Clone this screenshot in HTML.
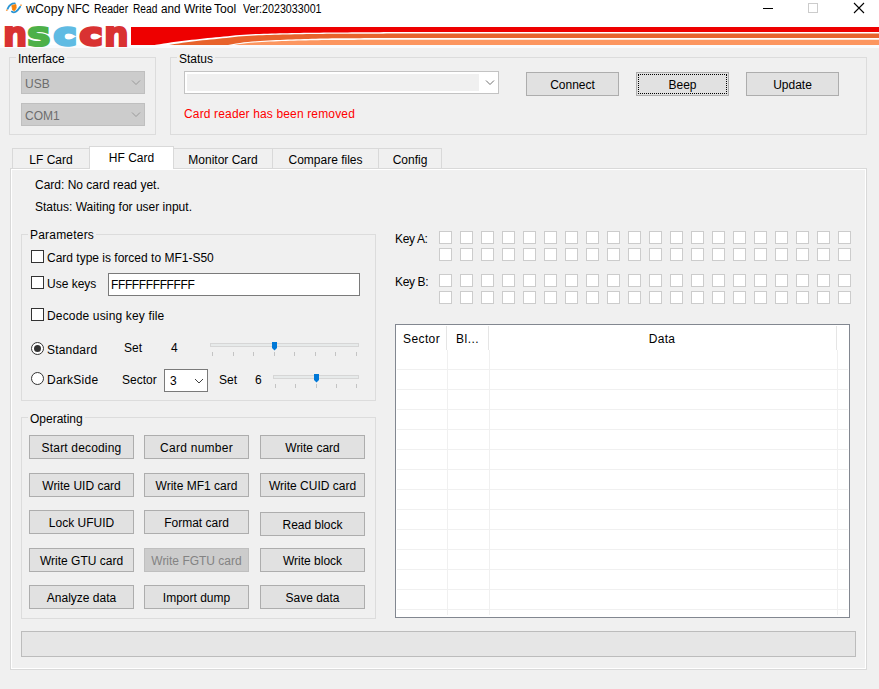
<!DOCTYPE html>
<html><head><meta charset="utf-8"><title>wCopy NFC Reader Read and Write Tool</title>
<style>
*{box-sizing:border-box;margin:0;padding:0}
html,body{width:879px;height:689px;overflow:hidden;background:#f0f0f0}
body{position:relative;font-family:"Liberation Sans",Arial,sans-serif;font-size:12px;color:#000}
.a{position:absolute}
.t{position:absolute;white-space:nowrap;line-height:14px;height:14px}
.gb{position:absolute;border:1px solid #dcdcdc}
.gl{position:absolute;background:#f0f0f0;padding:0 2px;white-space:nowrap;line-height:14px;height:14px}
.btn{position:absolute;background:#e1e1e1;border:1px solid #adadad;text-align:center;white-space:nowrap;line-height:14px}
.btn span{position:absolute;left:0;right:0;top:50%;margin-top:-6px}
.btn span.d{margin-top:-6px}
.cb{position:absolute;width:13px;height:13px;background:#fff;border:1px solid #333}
.kb{position:absolute;width:13px;height:13px;background:#fff;border:1px solid #cccccc}
.tab{position:absolute;top:148px;height:20px;border:1px solid #d9d9d9;border-bottom:none;background:#f0f0f0;text-align:center;line-height:14px}
.lg{position:absolute;top:0px;-webkit-text-stroke:2px currentColor;transform-origin:0 0}
.tab span{position:absolute;left:0;right:0;top:4px}
</style></head><body>
<!-- title bar -->
<div class="a" id="titlebar" style="left:0;top:0;width:879px;height:22px;background:#fff"></div>
<div class="t" id="title" style="left:27px;top:2px;width:300px"><span style="position:absolute;left:-0.7px;transform:scaleX(1.031);transform-origin:0 0">wCopy</span> <span style="position:absolute;left:40.4px;transform:scaleX(0.920);transform-origin:0 0">NFC</span> <span style="position:absolute;left:67.2px;transform:scaleX(0.867);transform-origin:0 0">Reader</span> <span style="position:absolute;left:105.6px;transform:scaleX(0.848);transform-origin:0 0">Read</span> <span style="position:absolute;left:133.6px;transform:scaleX(0.977);transform-origin:0 0">and</span> <span style="position:absolute;left:156.8px;transform:scaleX(1.001);transform-origin:0 0">Write</span> <span style="position:absolute;left:187.3px;transform:scaleX(1.014);transform-origin:0 0">Tool</span> <span style="position:absolute;left:215.7px;transform:scaleX(0.892);transform-origin:0 0">Ver:2023033001</span></div>
<svg class="a" style="left:0;top:0" width="879" height="22" viewBox="0 0 879 22">
<path d="M7.6,8.8 Q10,3.4 14.8,3.4" fill="none" stroke="#2a95d4" stroke-width="1.8" stroke-linecap="round"/>
<path d="M11.8,11.6 Q15.5,14.3 20.2,6.8" fill="none" stroke="#2a95d4" stroke-width="1.8" stroke-linecap="round"/>
<path d="M11.8,5.4 L16,4.6 L16.2,8 L14.6,10.8 L12.6,10 Z" fill="#f5820b" stroke="#f5820b" stroke-width="0.8" stroke-linejoin="round"/>
<circle cx="6.8" cy="10.2" r="0.9" fill="#f9a85a"/><circle cx="21" cy="5.2" r="0.9" fill="#f9a85a"/>
<rect x="763" y="8" width="10" height="1" fill="#000"/>
<rect x="808.5" y="3.5" width="9" height="9" fill="none" stroke="#cccccc" stroke-width="1"/>
<path d="M854,3 L864,13 M864,3 L854,13" stroke="#000" stroke-width="1.1" fill="none"/>
</svg>
<!-- banner -->
<svg class="a" style="left:0;top:22px" width="879" height="26" viewBox="0 22 879 26">
<rect x="0" y="22" width="879" height="26" fill="#fff"/>
<rect x="0" y="45" width="879" height="3" fill="#fafbfd"/>
<path d="M131,27 H879 V32 H460 L459.7,32.0 L455.7,32.0 L451.7,32.0 L447.7,32.0 L443.7,32.0 L439.7,32.0 L435.7,32.0 L431.7,32.0 L427.7,32.0 L423.7,32.0 L419.7,32.0 L415.7,32.0 L411.7,32.01 L407.7,32.02 L403.7,32.03 L399.7,32.04 L395.7,32.06 L391.7,32.08 L387.7,32.1 L383.7,32.12 L379.7,32.15 L375.7,32.17 L371.7,32.2 L367.7,32.23 L363.7,32.26 L359.7,32.29 L355.7,32.32 L351.7,32.35 L347.7,32.38 L343.7,32.41 L339.7,32.44 L335.7,32.48 L331.7,32.52 L327.7,32.56 L323.7,32.6 L319.7,32.65 L315.7,32.7 L311.7,32.75 L307.7,32.8 L303.7,32.86 L299.7,32.92 L295.7,32.99 L291.7,33.06 L287.7,33.14 L283.7,33.23 L279.7,33.33 L275.7,33.44 L271.7,33.55 L267.7,33.67 L263.7,33.78 L259.7,33.91 L255.7,34.05 L251.7,34.22 L247.7,34.42 L243.7,34.69 L239.7,35.01 L235.7,35.37 L231.7,35.76 L227.7,36.16 L223.7,36.57 L219.7,36.97 L215.7,37.35 L211.7,37.73 L207.7,38.12 L203.7,38.53 L199.7,38.94 L195.7,39.38 L191.7,39.83 L187.7,40.3 L183.7,40.78 L179.7,41.29 L175.7,41.81 L171.7,42.35 L167.7,42.92 L163.7,43.53 L159.7,44.15 L155.7,44.8 L155,45 H131 Z" fill="#ee0000"/>
<path d="M169,45 L170.5,44.8 L174.5,44.12 L178.5,43.48 L182.5,42.86 L186.5,42.28 L190.5,41.73 L194.5,41.22 L198.5,40.75 L202.5,40.33 L206.5,39.93 L210.5,39.55 L214.5,39.17 L218.5,38.78 L222.5,38.36 L226.5,37.92 L230.5,37.48 L234.5,37.04 L238.5,36.62 L242.5,36.24 L246.5,35.92 L250.5,35.67 L254.5,35.47 L258.5,35.3 L262.5,35.15 L266.5,35.01 L270.5,34.88 L274.5,34.77 L278.5,34.66 L282.5,34.56 L286.5,34.46 L290.5,34.38 L294.5,34.31 L298.5,34.24 L302.5,34.18 L306.5,34.11 L310.5,34.05 L314.5,33.99 L318.5,33.93 L322.5,33.88 L326.5,33.83 L330.5,33.79 L334.5,33.76 L338.5,33.73 L342.5,33.71 L346.5,33.7 L350.5,33.69 L354.5,33.68 L358.5,33.67 L362.5,33.66 L366.5,33.65 L370.5,33.65 L374.5,33.64 L378.5,33.63 L382.5,33.63 L386.5,33.62 L390.5,33.62 L394.5,33.61 L398.5,33.61 L402.5,33.61 L406.5,33.6 L410.5,33.6 L414.5,33.6 L418.5,33.6 L422.5,33.6 L426.5,33.6 L430.5,33.6 L434.5,33.6 L438.5,33.6 L442.5,33.6 L446.5,33.6 L450.5,33.6 L454.5,33.6 L458.5,33.6 H879 V38 H460 L460.0,38.0 L456.0,38.0 L452.0,38.0 L448.0,38.0 L444.0,38.0 L440.0,38.0 L436.0,38.0 L432.0,38.0 L428.0,38.0 L424.0,38.0 L420.0,38.0 L416.0,38.0 L412.0,38.0 L408.0,38.01 L404.0,38.01 L400.0,38.02 L396.0,38.02 L392.0,38.03 L388.0,38.04 L384.0,38.05 L380.0,38.06 L376.0,38.07 L372.0,38.09 L368.0,38.1 L364.0,38.12 L360.0,38.13 L356.0,38.15 L352.0,38.17 L348.0,38.19 L344.0,38.21 L340.0,38.24 L336.0,38.28 L332.0,38.35 L328.0,38.42 L324.0,38.5 L320.0,38.6 L316.0,38.7 L312.0,38.81 L308.0,38.93 L304.0,39.05 L300.0,39.18 L296.0,39.3 L292.0,39.43 L288.0,39.57 L284.0,39.72 L280.0,39.9 L276.0,40.09 L272.0,40.29 L268.0,40.51 L264.0,40.72 L260.0,40.96 L256.0,41.22 L252.0,41.53 L248.0,41.89 L244.0,42.36 L240.0,42.91 L236.0,43.54 L232.0,44.25 L228.0,45.0 Z" fill="#e8632c"/>
<path d="M233,45 L234.0,45.0 L238.0,44.33 L242.0,43.73 L246.0,43.21 L250.0,42.8 L254.0,42.49 L258.0,42.23 L262.0,42.0 L266.0,41.79 L270.0,41.6 L274.0,41.41 L278.0,41.23 L282.0,41.06 L286.0,40.92 L290.0,40.8 L294.0,40.7 L298.0,40.61 L302.0,40.51 L306.0,40.42 L310.0,40.34 L314.0,40.26 L318.0,40.19 L322.0,40.12 L326.0,40.06 L330.0,40.01 L334.0,39.97 L338.0,39.93 L342.0,39.91 L346.0,39.9 L350.0,39.89 L354.0,39.88 L358.0,39.87 L362.0,39.86 L366.0,39.85 L370.0,39.85 L374.0,39.84 L378.0,39.83 L382.0,39.83 L386.0,39.82 L390.0,39.82 L394.0,39.81 L398.0,39.81 L402.0,39.81 L406.0,39.8 L410.0,39.8 L414.0,39.8 L418.0,39.8 L422.0,39.8 L426.0,39.8 L430.0,39.8 L434.0,39.8 L438.0,39.8 L442.0,39.8 L446.0,39.8 L450.0,39.8 L454.0,39.8 L458.0,39.8 H879 V45 Z" fill="#fc9660"/>
</svg>
<div class="a" id="logo" style="left:0;top:22px;width:131px;height:26px;overflow:hidden;font-family:'DejaVu Sans','Liberation Sans',sans-serif;font-weight:bold;font-size:33px;line-height:26px">
<span class="lg" style="left:2.5px;color:#d93232;transform:scaleX(1.03)">n</span><span class="lg" style="left:27px;color:#4db048;transform:scaleX(1.2)">s</span><span class="lg" style="left:53.6px;top:-0.5px;font-size:30px;-webkit-text-stroke:3.4px #5fbbe3;color:#5fbbe3;transform:scaleX(1.25)">c</span><span class="lg" style="left:80.2px;top:-0.5px;font-size:30px;-webkit-text-stroke:3.4px #d93232;color:#d93232;transform:scaleX(1.25)">c</span><span class="lg" style="left:104.2px;color:#d93232;transform:scaleX(1.05)">n</span>
</div>


<!-- Interface group -->
<div class="gb" style="left:9px;top:57px;width:147px;height:78px"></div>
<div class="gl" style="left:16px;top:52px">Interface</div>
<div class="a" style="left:21px;top:71px;width:124px;height:23px;background:#ccc;border:1px solid #bfbfbf"></div>
<div class="t" style="left:25px;top:77px;color:#6d6d6d">USB</div>
<div class="a" style="left:21px;top:103px;width:124px;height:23px;background:#ccc;border:1px solid #bfbfbf"></div>
<div class="t" style="left:25px;top:109px;color:#6d6d6d">COM1</div>

<!-- Status group -->
<div class="gb" style="left:170px;top:57px;width:697px;height:78px"></div>
<div class="gl" style="left:177px;top:52px">Status</div>
<div class="a" style="left:184px;top:71px;width:315px;height:23px;background:#fff;border:1px solid #c3c3c3"></div>
<div class="a" style="left:187px;top:74px;width:292px;height:17px;background:#f0f0f0"></div>
<div class="t" style="left:184px;top:107px;color:#ff0000;letter-spacing:0.15px">Card reader has been removed</div>

<div class="btn" style="left:526px;top:72px;width:93px;height:24px"><span>Connect</span></div>
<div class="btn" style="left:636px;top:72px;width:93px;height:24px"><span>Beep</span><i class="a" style="left:1px;top:1px;right:1px;bottom:1px;border:1px dotted #000"></i></div>
<div class="btn" style="left:746px;top:72px;width:93px;height:24px"><span>Update</span></div>

<!-- tabs -->
<div class="a" id="tabpage" style="left:10px;top:168px;width:857px;height:502px;border:1px solid #d9d9d9;background:#f0f0f0"><div class="a" style="left:0;top:0;right:0;bottom:0;border:1px solid #fff"></div></div>
<div class="tab" style="left:12px;width:78px"><span>LF Card</span></div>
<div class="tab" style="left:173px;width:100px"><span>Monitor Card</span></div>
<div class="tab" style="left:272px;width:107px"><span>Compare files</span></div>
<div class="tab" style="left:378px;width:64px"><span>Config</span></div>
<div class="tab" style="left:89px;width:85px;top:146px;height:23px;background:#fff"><span style="top:4px">HF Card</span></div>

<div class="t" style="left:35px;top:178px">Card: No card read yet.</div>
<div class="t" style="left:35px;top:200px">Status: Waiting for user input.</div>


<!-- Parameters -->
<div class="gb" style="left:21px;top:234px;width:355px;height:167px"></div>
<div class="gl" style="left:28px;top:228px;letter-spacing:0.2px">Parameters</div>
<div class="cb" style="left:31px;top:250px"></div>
<div class="t" style="left:47px;top:251px">Card type is forced to MF1-S50</div>
<div class="cb" style="left:31px;top:276px"></div>
<div class="t" style="left:47px;top:277px">Use keys</div>
<div class="a" style="left:108px;top:273px;width:252px;height:23px;background:#fff;border:1px solid #7a7a7a"></div>
<div class="t" style="left:111px;top:278px;letter-spacing:-0.38px">FFFFFFFFFFFF</div>
<div class="cb" style="left:31px;top:308px"></div>
<div class="t" style="left:47px;top:309px;letter-spacing:0.16px">Decode using key file</div>
<div class="cb rd" style="left:31px;top:342px;border-radius:50%"></div>
<div class="a" style="left:34px;top:345px;width:7px;height:7px;border-radius:50%;background:#333"></div>
<div class="t" style="left:47px;top:343px;letter-spacing:0.2px">Standard</div>
<div class="t" style="left:124px;top:341px">Set</div>
<div class="t" style="left:171px;top:341px">4</div>
<div class="cb rd" style="left:31px;top:372px;border-radius:50%"></div>
<div class="t" style="left:47px;top:373px;letter-spacing:0.25px">DarkSide</div>
<div class="t" style="left:122px;top:373px">Sector</div>
<div class="a" style="left:164px;top:369px;width:44px;height:23px;background:#fff;border:1px solid #7a7a7a"></div>
<div class="t" style="left:170px;top:374px">3</div>
<div class="t" style="left:219px;top:373px">Set</div>
<div class="t" style="left:255px;top:373px">6</div>
<div class="a" style="left:210px;top:343px;width:149px;height:4px;background:#e7eaea;border:1px solid #d6d6d6"></div>
<div class="a" style="left:212px;top:352px;width:1px;height:4px;background:#c4c4c4"></div>
<div class="a" style="left:233px;top:352px;width:1px;height:4px;background:#c4c4c4"></div>
<div class="a" style="left:253px;top:352px;width:1px;height:4px;background:#c4c4c4"></div>
<div class="a" style="left:274px;top:352px;width:1px;height:4px;background:#c4c4c4"></div>
<div class="a" style="left:294px;top:352px;width:1px;height:4px;background:#c4c4c4"></div>
<div class="a" style="left:315px;top:352px;width:1px;height:4px;background:#c4c4c4"></div>
<div class="a" style="left:335px;top:352px;width:1px;height:4px;background:#c4c4c4"></div>
<div class="a" style="left:356px;top:352px;width:1px;height:4px;background:#c4c4c4"></div>
<div class="a" style="left:273px;top:375px;width:86px;height:4px;background:#e7eaea;border:1px solid #d6d6d6"></div>
<div class="a" style="left:275px;top:384px;width:1px;height:4px;background:#c4c4c4"></div>
<div class="a" style="left:295px;top:384px;width:1px;height:4px;background:#c4c4c4"></div>
<div class="a" style="left:316px;top:384px;width:1px;height:4px;background:#c4c4c4"></div>
<div class="a" style="left:336px;top:384px;width:1px;height:4px;background:#c4c4c4"></div>
<div class="a" style="left:356px;top:384px;width:1px;height:4px;background:#c4c4c4"></div>
<svg class="a" style="left:260px;top:340px" width="70" height="45" viewBox="260 340 70 45">
<path d="M272,342 H277 V348 L274.5,350.5 L272,348 Z" fill="#0078d7"/>
<path d="M314,374 H319 V380 L316.500,382.5 L314,380 Z" fill="#0078d7"/>
</svg>

<!-- Operating -->
<div class="gb" style="left:21px;top:417px;width:355px;height:202px"></div>
<div class="gl" style="left:28px;top:412px">Operating</div>
<div class="btn" style="left:29px;top:435px;width:105px;height:24px"><span class="d" style="letter-spacing:0.17px">Start decoding</span></div>
<div class="btn" style="left:144px;top:435px;width:105px;height:24px"><span class="d" style="letter-spacing:0.25px">Card number</span></div>
<div class="btn" style="left:260px;top:435px;width:105px;height:24px"><span class="d">Write card</span></div>
<div class="btn" style="left:29px;top:473px;width:105px;height:24px"><span class="d">Write UID card</span></div>
<div class="btn" style="left:144px;top:473px;width:105px;height:24px"><span class="d">Write MF1 card</span></div>
<div class="btn" style="left:260px;top:473px;width:105px;height:24px"><span class="d">Write CUID card</span></div>
<div class="btn" style="left:29px;top:510px;width:105px;height:24px"><span class="d">Lock UFUID</span></div>
<div class="btn" style="left:144px;top:510px;width:105px;height:24px"><span class="d">Format card</span></div>
<div class="btn" style="left:260px;top:512px;width:105px;height:24px"><span class="d">Read block</span></div>
<div class="btn" style="left:29px;top:548px;width:105px;height:24px"><span class="d">Write GTU card</span></div>
<div class="btn" style="left:144px;top:548px;width:105px;height:24px;background:#cccccc;border-color:#bfbfbf;color:#838383"><span class="d">Write FGTU card</span></div>
<div class="btn" style="left:260px;top:548px;width:105px;height:24px"><span class="d">Write block</span></div>
<div class="btn" style="left:29px;top:585px;width:105px;height:24px"><span class="d">Analyze data</span></div>
<div class="btn" style="left:144px;top:585px;width:105px;height:24px"><span class="d">Import dump</span></div>
<div class="btn" style="left:260px;top:585px;width:105px;height:24px"><span class="d">Save data</span></div>

<!-- Keys -->
<div class="t" style="left:395px;top:232px;letter-spacing:-0.35px">Key A:</div>
<div class="t" style="left:395px;top:275px;letter-spacing:-0.35px">Key B:</div>
<div class="kb" style="left:439px;top:231px"></div><div class="kb" style="left:460px;top:231px"></div><div class="kb" style="left:481px;top:231px"></div><div class="kb" style="left:502px;top:231px"></div><div class="kb" style="left:523px;top:231px"></div><div class="kb" style="left:544px;top:231px"></div><div class="kb" style="left:565px;top:231px"></div><div class="kb" style="left:586px;top:231px"></div><div class="kb" style="left:607px;top:231px"></div><div class="kb" style="left:628px;top:231px"></div><div class="kb" style="left:649px;top:231px"></div><div class="kb" style="left:670px;top:231px"></div><div class="kb" style="left:691px;top:231px"></div><div class="kb" style="left:712px;top:231px"></div><div class="kb" style="left:733px;top:231px"></div><div class="kb" style="left:754px;top:231px"></div><div class="kb" style="left:775px;top:231px"></div><div class="kb" style="left:796px;top:231px"></div><div class="kb" style="left:817px;top:231px"></div><div class="kb" style="left:838px;top:231px"></div>
<div class="kb" style="left:439px;top:248px"></div><div class="kb" style="left:460px;top:248px"></div><div class="kb" style="left:481px;top:248px"></div><div class="kb" style="left:502px;top:248px"></div><div class="kb" style="left:523px;top:248px"></div><div class="kb" style="left:544px;top:248px"></div><div class="kb" style="left:565px;top:248px"></div><div class="kb" style="left:586px;top:248px"></div><div class="kb" style="left:607px;top:248px"></div><div class="kb" style="left:628px;top:248px"></div><div class="kb" style="left:649px;top:248px"></div><div class="kb" style="left:670px;top:248px"></div><div class="kb" style="left:691px;top:248px"></div><div class="kb" style="left:712px;top:248px"></div><div class="kb" style="left:733px;top:248px"></div><div class="kb" style="left:754px;top:248px"></div><div class="kb" style="left:775px;top:248px"></div><div class="kb" style="left:796px;top:248px"></div><div class="kb" style="left:817px;top:248px"></div><div class="kb" style="left:838px;top:248px"></div>
<div class="kb" style="left:439px;top:274px"></div><div class="kb" style="left:460px;top:274px"></div><div class="kb" style="left:481px;top:274px"></div><div class="kb" style="left:502px;top:274px"></div><div class="kb" style="left:523px;top:274px"></div><div class="kb" style="left:544px;top:274px"></div><div class="kb" style="left:565px;top:274px"></div><div class="kb" style="left:586px;top:274px"></div><div class="kb" style="left:607px;top:274px"></div><div class="kb" style="left:628px;top:274px"></div><div class="kb" style="left:649px;top:274px"></div><div class="kb" style="left:670px;top:274px"></div><div class="kb" style="left:691px;top:274px"></div><div class="kb" style="left:712px;top:274px"></div><div class="kb" style="left:733px;top:274px"></div><div class="kb" style="left:754px;top:274px"></div><div class="kb" style="left:775px;top:274px"></div><div class="kb" style="left:796px;top:274px"></div><div class="kb" style="left:817px;top:274px"></div><div class="kb" style="left:838px;top:274px"></div>
<div class="kb" style="left:439px;top:291px"></div><div class="kb" style="left:460px;top:291px"></div><div class="kb" style="left:481px;top:291px"></div><div class="kb" style="left:502px;top:291px"></div><div class="kb" style="left:523px;top:291px"></div><div class="kb" style="left:544px;top:291px"></div><div class="kb" style="left:565px;top:291px"></div><div class="kb" style="left:586px;top:291px"></div><div class="kb" style="left:607px;top:291px"></div><div class="kb" style="left:628px;top:291px"></div><div class="kb" style="left:649px;top:291px"></div><div class="kb" style="left:670px;top:291px"></div><div class="kb" style="left:691px;top:291px"></div><div class="kb" style="left:712px;top:291px"></div><div class="kb" style="left:733px;top:291px"></div><div class="kb" style="left:754px;top:291px"></div><div class="kb" style="left:775px;top:291px"></div><div class="kb" style="left:796px;top:291px"></div><div class="kb" style="left:817px;top:291px"></div><div class="kb" style="left:838px;top:291px"></div>

<!-- Table -->
<div class="a" style="left:395px;top:324px;width:455px;height:294px;background:#fff;border:1px solid #828790"></div>
<div class="a" style="left:397px;top:369px;width:451px;height:1px;background:#f0f0f0"></div>
<div class="a" style="left:397px;top:389px;width:451px;height:1px;background:#f0f0f0"></div>
<div class="a" style="left:397px;top:409px;width:451px;height:1px;background:#f0f0f0"></div>
<div class="a" style="left:397px;top:429px;width:451px;height:1px;background:#f0f0f0"></div>
<div class="a" style="left:397px;top:449px;width:451px;height:1px;background:#f0f0f0"></div>
<div class="a" style="left:397px;top:469px;width:451px;height:1px;background:#f0f0f0"></div>
<div class="a" style="left:397px;top:489px;width:451px;height:1px;background:#f0f0f0"></div>
<div class="a" style="left:397px;top:509px;width:451px;height:1px;background:#f0f0f0"></div>
<div class="a" style="left:397px;top:529px;width:451px;height:1px;background:#f0f0f0"></div>
<div class="a" style="left:397px;top:549px;width:451px;height:1px;background:#f0f0f0"></div>
<div class="a" style="left:397px;top:569px;width:451px;height:1px;background:#f0f0f0"></div>
<div class="a" style="left:397px;top:589px;width:451px;height:1px;background:#f0f0f0"></div>
<div class="a" style="left:397px;top:609px;width:451px;height:1px;background:#f0f0f0"></div>
<div class="a" style="left:446px;top:326px;width:1px;height:24px;background:#e5e5e5"></div>
<div class="a" style="left:447px;top:350px;width:1px;height:265px;background:#f0f0f0"></div>
<div class="a" style="left:488px;top:326px;width:1px;height:24px;background:#e5e5e5"></div>
<div class="a" style="left:489px;top:350px;width:1px;height:265px;background:#f0f0f0"></div>
<div class="a" style="left:836px;top:326px;width:1px;height:24px;background:#e5e5e5"></div>
<div class="a" style="left:837px;top:350px;width:1px;height:265px;background:#f0f0f0"></div>
<div class="t" style="left:403px;top:332px;letter-spacing:0.4px">Sector</div>
<div class="t" style="left:456px;top:332px;letter-spacing:0.5px">Bl...</div>
<div class="t" style="left:488px;top:332px;width:348px;text-align:center;letter-spacing:0.3px">Data</div>
<div class="a" style="left:21px;top:631px;width:835px;height:26px;background:#e6e6e6;border:1px solid #bcbcbc"></div>
<svg class="a" style="left:0;top:60px" width="879" height="340" viewBox="0 60 879 340" fill="none">
<path d="M132,80.5 L136,84.5 L140,80.5" stroke="#9a9a9a" stroke-width="1"/>
<path d="M132,112.5 L136,116.5 L140,112.5" stroke="#9a9a9a" stroke-width="1"/>
<path d="M486,80.5 L490,84.5 L494,80.5" stroke="#707070" stroke-width="1"/>
<path d="M195,379 L199,383 L203,379" stroke="#404040" stroke-width="1"/>
</svg>
</body></html>
